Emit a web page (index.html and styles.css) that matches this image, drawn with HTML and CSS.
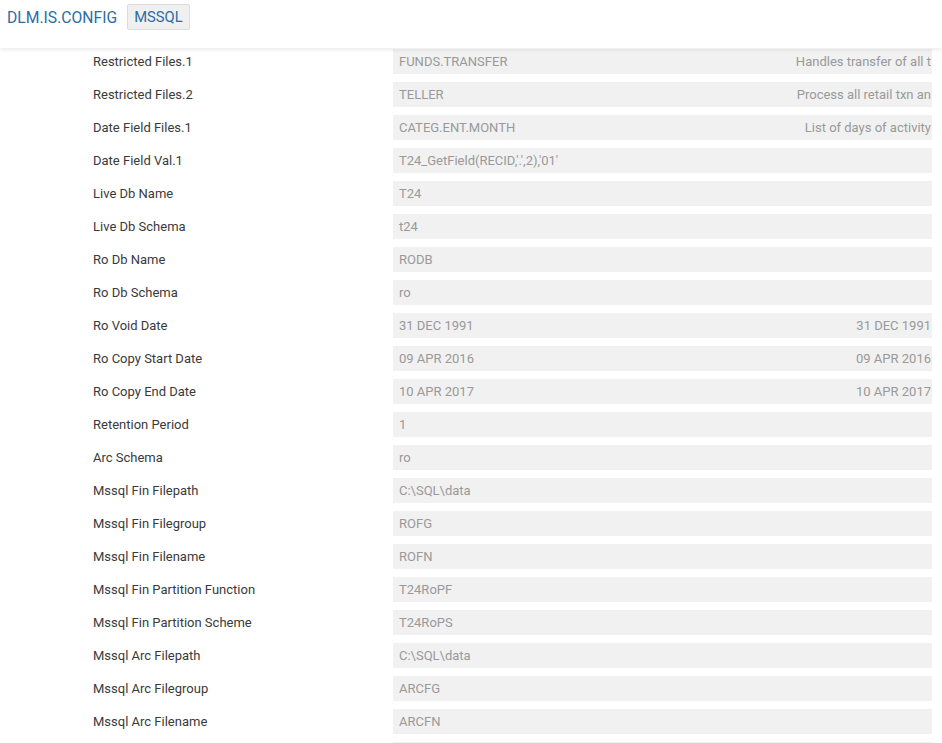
FILE: index.html
```html
<!DOCTYPE html>
<html>
<head>
<meta charset="utf-8">
<link rel="stylesheet" href="styles.css">
</head>
<body>
<header class="topbar">
  <span class="app-title">DLM.IS.CONFIG</span>
  <span class="tab">MSSQL</span>
</header>
<main class="form">
  <div class="row"><div class="label">Restricted Files.1</div><div class="field"><span class="val">FUNDS.TRANSFER</span><span class="desc">Handles transfer of all t</span></div></div>
  <div class="row"><div class="label">Restricted Files.2</div><div class="field"><span class="val">TELLER</span><span class="desc">Process all retail txn an</span></div></div>
  <div class="row"><div class="label">Date Field Files.1</div><div class="field"><span class="val">CATEG.ENT.MONTH</span><span class="desc">List of days of activity</span></div></div>
  <div class="row"><div class="label">Date Field Val.1</div><div class="field"><span class="val">T24_GetField(RECID,'.',2),'01'</span></div></div>
  <div class="row"><div class="label">Live Db Name</div><div class="field"><span class="val">T24</span></div></div>
  <div class="row"><div class="label">Live Db Schema</div><div class="field"><span class="val">t24</span></div></div>
  <div class="row"><div class="label">Ro Db Name</div><div class="field"><span class="val">RODB</span></div></div>
  <div class="row"><div class="label">Ro Db Schema</div><div class="field"><span class="val">ro</span></div></div>
  <div class="row"><div class="label">Ro Void Date</div><div class="field"><span class="val">31 DEC 1991</span><span class="desc">31 DEC 1991</span></div></div>
  <div class="row"><div class="label">Ro Copy Start Date</div><div class="field"><span class="val">09 APR 2016</span><span class="desc">09 APR 2016</span></div></div>
  <div class="row"><div class="label">Ro Copy End Date</div><div class="field"><span class="val">10 APR 2017</span><span class="desc">10 APR 2017</span></div></div>
  <div class="row"><div class="label">Retention Period</div><div class="field"><span class="val">1</span></div></div>
  <div class="row"><div class="label">Arc Schema</div><div class="field"><span class="val">ro</span></div></div>
  <div class="row"><div class="label">Mssql Fin Filepath</div><div class="field"><span class="val">C:\SQL\data</span></div></div>
  <div class="row"><div class="label">Mssql Fin Filegroup</div><div class="field"><span class="val">ROFG</span></div></div>
  <div class="row"><div class="label">Mssql Fin Filename</div><div class="field"><span class="val">ROFN</span></div></div>
  <div class="row"><div class="label">Mssql Fin Partition Function</div><div class="field"><span class="val">T24RoPF</span></div></div>
  <div class="row"><div class="label">Mssql Fin Partition Scheme</div><div class="field"><span class="val">T24RoPS</span></div></div>
  <div class="row"><div class="label">Mssql Arc Filepath</div><div class="field"><span class="val">C:\SQL\data</span></div></div>
  <div class="row"><div class="label">Mssql Arc Filegroup</div><div class="field"><span class="val">ARCFG</span></div></div>
  <div class="row"><div class="label">Mssql Arc Filename</div><div class="field"><span class="val">ARCFN</span></div></div>
  <div class="row"><div class="label"></div><div class="field"><span class="val"></span></div></div>
</main>
</body>
</html>
```
FILE: styles.css
```css
html, body {
  margin: 0;
  padding: 0;
  background: #fff;
  font-family: Roboto, "Liberation Sans", sans-serif;
  overflow: hidden;
}
.topbar {
  position: relative;
  z-index: 2;
  height: 48px;
  box-sizing: border-box;
  background: #fff;
  display: flex;
  align-items: flex-start;
  padding: 4px 0 0 7px;
  box-shadow: 0 2px 4px rgba(0,0,0,0.08);
}
.app-title {
  font-size: 15.7px;
  color: #2d6ca2;
  line-height: 26px;
  margin-top: 1px;
}
.tab {
  margin-left: 10px;
  height: 26px;
  box-sizing: border-box;
  padding: 0 6px;
  background: #f0f0f0;
  border: 1px solid #dcdcdc;
  border-radius: 2px;
  color: #2d6ca2;
  font-size: 14.8px;
  line-height: 24px;
}
.form {
  display: flex;
  flex-direction: column;
  gap: 8px;
  padding-top: 1px;
}
.row {
  display: flex;
  height: 25px;
  align-items: center;
}
.label {
  width: 393px;
  flex: none;
  padding-left: 93px;
  box-sizing: border-box;
  font-size: 13px;
  color: #3a3a3a;
}
.field {
  width: 539px;
  flex: none;
  height: 25px;
  background: #f1f1f1;
  display: flex;
  align-items: center;
  justify-content: space-between;
  padding: 0 1px 0 6px;
  box-sizing: border-box;
  font-size: 13px;
  color: #999;
  white-space: nowrap;
  overflow: hidden;
}
```
